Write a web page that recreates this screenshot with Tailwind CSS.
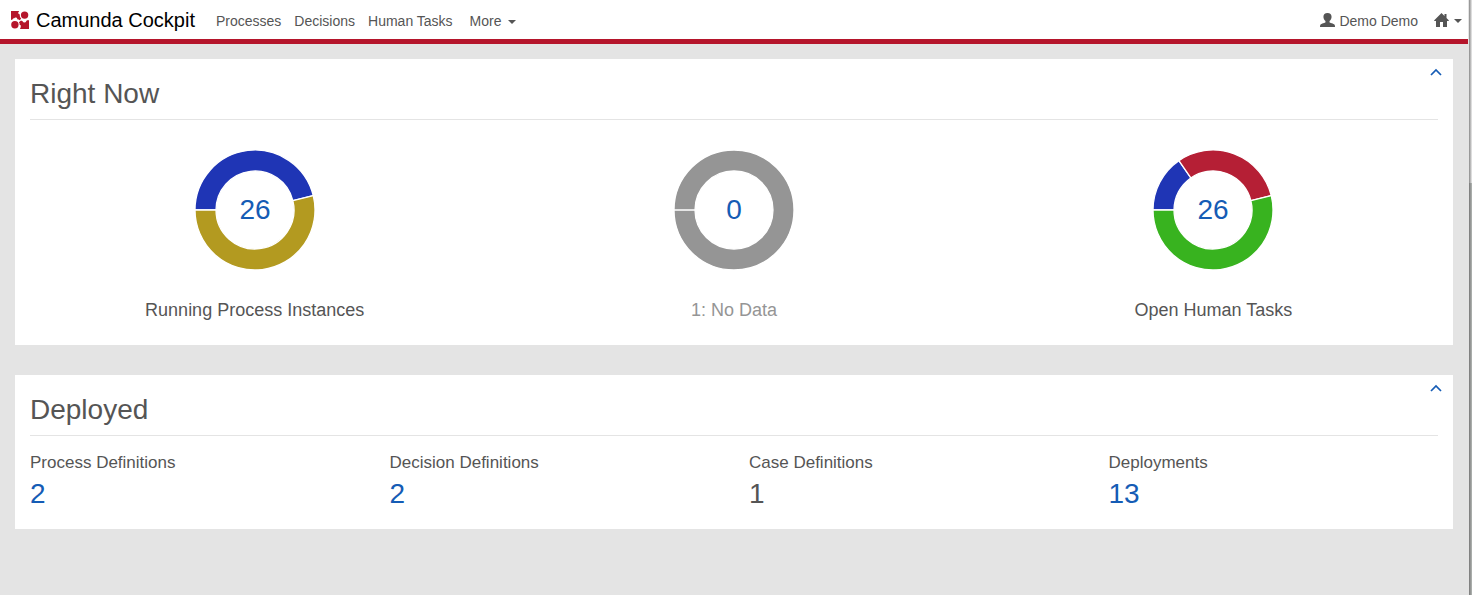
<!DOCTYPE html>
<html lang="en">
<head>
<meta charset="utf-8">
<meta name="viewport" content="width=device-width, initial-scale=1">
<title>Camunda Cockpit</title>
<script src="https://cdn.jsdelivr.net/npm/@tailwindcss/browser@4"></script>
</head>
<body class="flex min-h-screen bg-[#e4e4e4] font-['Liberation_Sans',Arial,sans-serif] text-sm text-[#555]">
<div class="min-w-0 flex-1">
  <header class="flex h-11 items-center border-b-5 border-[#b5152b] bg-white pl-[11px] pr-[6px] whitespace-nowrap">
    <a href="#" class="flex items-center gap-[7px] text-xl leading-[38px] text-black">
      <svg class="size-[18px]" viewBox="0 0 18 18" fill="#b5152b" aria-hidden="true">
        <path d="M0 0H8.200L7.200 1.600A1.600 1.600 0 0 0 8.800 3.400V5A4.700 4.700 0 0 0 10.200 7.600L8.800 9.200A5 5 0 0 0 6.300 8.200 1.700 1.700 0 0 0 3.200 7.200 1.700 1.700 0 0 0 1.500 8.600L0 9Z"/>
        <circle cx="13.600" cy="4.100" r="3.700"/>
        <circle cx="3.900" cy="13.700" r="3.700"/>
        <path d="M18 9.300V18H9L9.700 16.200A1.700 1.700 0 0 0 8.600 13.800V12.500L7.900 11.200 10 9.600 11.600 10.200A1.900 1.900 0 0 0 15.200 10.200L16 9.300Z"/>
      </svg>
      <span>Camunda Cockpit</span>
    </a>
    <nav class="ml-[21px] flex items-center gap-[13px] pt-[3px]" aria-label="Main">
      <a href="#">Processes</a>
      <a href="#">Decisions</a>
      <a href="#">Human Tasks</a>
      <button type="button" class="ml-1 flex items-center gap-[6px]">More
        <svg class="mt-px h-1 w-2" viewBox="0 0 8 4" fill="currentColor" aria-hidden="true"><path d="M0 0h8L4 4Z"/></svg>
      </button>
    </nav>
    <div class="ml-auto flex items-center gap-4 pt-[3px]">
      <button type="button" class="flex items-center gap-1">
        <svg class="mb-[2px] h-[14px] w-[15px]" viewBox="0 0 14 14" preserveAspectRatio="none" fill="currentColor" aria-hidden="true"><path d="M7 0C9.500 0 10.800 1.500 10.800 3.700c0 1.900-.800 3.400-1.900 4.300v1.300c0 .6 4 1.400 4.700 2.400.4.500.4 1.300.4 2.300H0c0-1 0-1.800.4-2.300.7-1 4.700-1.800 4.700-2.400V8C4 7.100 3.200 5.600 3.200 3.700 3.200 1.500 4.500 0 7 0Z"/></svg>
        Demo Demo
      </button>
      <button type="button" class="flex items-center gap-[5px]" aria-label="Applications">
        <svg class="mb-[2px] h-[14px] w-[15px]" viewBox="0 0 15 14" fill="currentColor" aria-hidden="true"><path d="M7.500 0 10.500 3V1h2v4L15 7.500 14.500 8H13v6H9V9H6v5H2V8H.5L0 7.500Z"/></svg>
        <svg class="h-1 w-2" viewBox="0 0 8 4" fill="currentColor" aria-hidden="true"><path d="M0 0h8L4 4Z"/></svg>
      </button>
    </div>
  </header>

  <main class="flex flex-col gap-[30px] p-[15px]">
    <section class="relative bg-white px-[15px] pt-[15px] pb-[22px]" aria-labelledby="now">
      <button type="button" class="absolute top-2 right-[11px] text-[#155cb5]" aria-label="Collapse Right Now">
        <svg class="h-[10px] w-3" viewBox="0 0 12 10" fill="none" stroke="currentColor" stroke-width="1.700" aria-hidden="true"><path d="M1 8 6 3l5 5"/></svg>
      </button>
      <h1 id="now" class="border-b border-[#e4e4e4] pb-[6px] text-[28px] leading-[39px]">Right Now</h1>
      <div class="-mx-[15px] grid grid-cols-3 pt-[29px] text-center text-lg leading-[26px]">
        <a href="#" class="flex flex-col items-center gap-[26px]">
          <svg class="size-[122px]" viewBox="-61 -61 122 122" role="img" aria-label="26 running process instances">
            <g stroke="#fff" stroke-width="1.300">
              <path fill="#1f35b5" d="M-60 0A60 60 0 0 1 58.260-14.360L37.870-9.330A39 39 0 0 0-39 0Z"/>
              <path fill="#b39a20" d="M58.260-14.360A60 60 0 1 1-60 0H-39A39 39 0 1 0 37.870-9.330Z"/>
            </g>
            <text y="9" text-anchor="middle" font-size="28" fill="#155cb5">26</text>
          </svg>
          <span>Running Process Instances</span>
        </a>
        <a href="#" class="flex flex-col items-center gap-[26px] text-[#959595]">
          <svg class="size-[122px]" viewBox="-61 -61 122 122" role="img" aria-label="0, no data">
            <path fill="#959595" stroke="#fff" stroke-width="1.300" d="M-60 0A60 60 0 1 1 60 0A60 60 0 1 1-60 0H-39A39 39 0 1 0 39 0A39 39 0 1 0-39 0Z"/>
            <text y="9" text-anchor="middle" font-size="28" fill="#155cb5">0</text>
          </svg>
          <span>1: No Data</span>
        </a>
        <a href="#" class="flex flex-col items-center gap-[26px]">
          <svg class="size-[122px]" viewBox="-61 -61 122 122" role="img" aria-label="26 open human tasks">
            <g stroke="#fff" stroke-width="1.300">
              <path fill="#1f35b5" d="M-60 0A60 60 0 0 1-34.090-49.380L-22.160-32.090A39 39 0 0 0-39 0Z"/>
              <path fill="#b51f35" d="M-34.090-49.380A60 60 0 0 1 58.260-14.360L37.870-9.330A39 39 0 0 0-22.160-32.090Z"/>
              <path fill="#38b31f" d="M58.260-14.360A60 60 0 1 1-60 0H-39A39 39 0 1 0 37.870-9.330Z"/>
            </g>
            <text y="9" text-anchor="middle" font-size="28" fill="#155cb5">26</text>
          </svg>
          <span>Open Human Tasks</span>
        </a>
      </div>
    </section>

    <section class="relative bg-white px-[15px] pt-[15px] pb-[16px]" aria-labelledby="deployed">
      <button type="button" class="absolute top-2 right-[11px] text-[#155cb5]" aria-label="Collapse Deployed">
        <svg class="h-[10px] w-3" viewBox="0 0 12 10" fill="none" stroke="currentColor" stroke-width="1.700" aria-hidden="true"><path d="M1 8 6 3l5 5"/></svg>
      </button>
      <h1 id="deployed" class="border-b border-[#e4e4e4] pb-[6px] text-[28px] leading-[39px]">Deployed</h1>
      <dl class="-mx-[15px] grid grid-cols-4 pt-4">
        <div class="px-[15px]"><dt class="text-[17px] leading-[22px]">Process Definitions</dt><dd class="text-[28px] leading-[39px] text-[#155cb5]"><a href="#">2</a></dd></div>
        <div class="px-[15px]"><dt class="text-[17px] leading-[22px]">Decision Definitions</dt><dd class="text-[28px] leading-[39px] text-[#155cb5]"><a href="#">2</a></dd></div>
        <div class="px-[15px]"><dt class="text-[17px] leading-[22px]">Case Definitions</dt><dd class="text-[28px] leading-[39px]">1</dd></div>
        <div class="px-[15px]"><dt class="text-[17px] leading-[22px]">Deployments</dt><dd class="text-[28px] leading-[39px] text-[#155cb5]"><a href="#">13</a></dd></div>
      </dl>
    </section>
  </main>
</div>
<div class="flex w-1 flex-col border-l border-[#e4e4e4]" aria-hidden="true">
  <div class="h-[183px] bg-linear-to-r from-[#888] to-[#eee]"></div>
  <div class="flex-1 bg-linear-to-r from-[#777] to-[#b4b8b5]"></div>
</div>
</body>
</html>
